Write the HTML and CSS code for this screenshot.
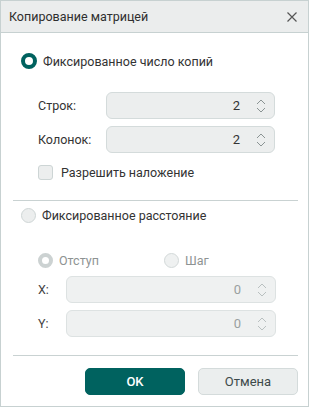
FILE: index.html
```html
<!DOCTYPE html>
<html lang="ru">
<head>
<meta charset="utf-8">
<link rel="stylesheet" href="styles.css">
</head>
<body>
<div class="dialog">
  <div class="header">
    <span class="title">Копирование матрицей</span>
    <svg class="close" width="12" height="12" viewBox="0 0 12 12"><path d="M1.5 1.5 L10.5 10.5 M10.5 1.5 L1.5 10.5" stroke="#555" stroke-width="1.2" fill="none"/></svg>
  </div>
  <div class="content">
    <div class="section s1">
      <label class="radio-row main">
        <span class="radio checked"></span>
        <span class="text">Фиксированное число копий</span>
      </label>
      <div class="fields">
        <div class="field">
          <span class="flabel">Строк:</span>
          <div class="spin wide1">
            <span class="val">2</span>
            <svg class="arrows" width="10" height="16" viewBox="0 0 10 16"><path d="M1 6 L5 2 L9 6 M1 10 L5 14 L9 10" stroke="#8a9393" stroke-width="1" fill="none"/></svg>
          </div>
        </div>
        <div class="field">
          <span class="flabel">Колонок:</span>
          <div class="spin wide1">
            <span class="val">2</span>
            <svg class="arrows" width="10" height="16" viewBox="0 0 10 16"><path d="M1 6 L5 2 L9 6 M1 10 L5 14 L9 10" stroke="#8a9393" stroke-width="1" fill="none"/></svg>
          </div>
        </div>
        <label class="check-row">
          <span class="checkbox"></span>
          <span class="text">Разрешить наложение</span>
        </label>
      </div>
    </div>
    <div class="divider"></div>
    <div class="section s2">
      <label class="radio-row main">
        <span class="radio"></span>
        <span class="text">Фиксированное расстояние</span>
      </label>
      <div class="sub-radios">
        <label class="radio-row disabled r-otst">
          <span class="radio checked-dis"></span>
          <span class="text">Отступ</span>
        </label>
        <label class="radio-row disabled">
          <span class="radio dis"></span>
          <span class="text">Шаг</span>
        </label>
      </div>
      <div class="fields2">
        <div class="field">
          <span class="flabel small">X:</span>
          <div class="spin wide2 dis">
            <span class="val">0</span>
            <svg class="arrows" width="10" height="16" viewBox="0 0 10 16"><path d="M1 6 L5 2 L9 6 M1 10 L5 14 L9 10" stroke="#b9c0c0" stroke-width="1" fill="none"/></svg>
          </div>
        </div>
        <div class="field">
          <span class="flabel small">Y:</span>
          <div class="spin wide2 dis">
            <span class="val">0</span>
            <svg class="arrows" width="10" height="16" viewBox="0 0 10 16"><path d="M1 6 L5 2 L9 6 M1 10 L5 14 L9 10" stroke="#b9c0c0" stroke-width="1" fill="none"/></svg>
          </div>
        </div>
      </div>
    </div>
    <div class="divider d2"></div>
    <div class="buttons">
      <button class="btn ok">OK</button>
      <button class="btn cancel">Отмена</button>
    </div>
  </div>
</div>
</body>
</html>
```

FILE: styles.css
```css
* { box-sizing: border-box; }
html, body { margin: 0; padding: 0; background: #fff; }
body { font-family: Roboto, "Liberation Sans", sans-serif; font-size: 12.5px; color: #333; }

.dialog {
  width: 309px;
  height: 407px;
  border: 1px solid #c7d1d1;
  background: #fff;
  display: flex;
  flex-direction: column;
}
.header {
  height: 32px;
  background: #ebeded;
  border-bottom: 1px solid #c7d1d1;
  display: flex;
  align-items: center;
  justify-content: space-between;
  padding: 0 10px 0 8px;
  flex: none;
}
.title { font-size: 12.5px; color: #2f2f2f; }
.close { display: block; }

.content { padding: 0 10px 0 12px; display: flex; flex-direction: column; }

.radio-row { display: flex; align-items: center; gap: 6px; }
.radio {
  width: 15px; height: 15px; border-radius: 50%;
  border: 1px solid #cfd6d6; background: #eceeee; flex: none;
}
.radio.checked { border: 4px solid #00625f; background: #fff; width: 16px; height: 16px; }
.radio.checked-dis { border: 4px solid #ccd2d2; background: #fff; width: 15px; height: 15px; }
.radio.dis { border-color: #d3d9d9; background: #eff1f1; }

.s1 { padding-top: 20px; }
.s1 .main { padding-left: 8px; gap: 6px; }
.fields { padding: 23px 0 0 25px; display: flex; flex-direction: column; gap: 7px; }
.field { display: flex; align-items: center; }
.flabel { width: 68px; flex: none; }
.flabel.small { width: 28px; color: #444; }

.spin {
  height: 27px;
  border: 1px solid #d4dbdb;
  border-radius: 6px;
  background: #eceeee;
  display: flex; align-items: center; justify-content: flex-end;
  padding-right: 8px;
}
.wide1 { width: 169px; }
.wide2 { width: 210px; }
.val { margin-right: 16px; font-size: 13px; color: #333; }
.spin.dis { background: #eff1f1; border-color: #dde2e2; }
.spin.dis .val { color: #9aa0a0; }
.arrows { display: block; }

.check-row { display: flex; align-items: center; gap: 8px; margin-top: 5px; }
.checkbox {
  width: 15px; height: 15px; border-radius: 3px;
  border: 1px solid #cdd5d5; background: #eceeee; flex: none;
}

.divider { height: 1px; background: #c9d2d2; margin-top: 20px; width: 285px; }
.d2 { margin-top: 18px; }

.s2 { padding-top: 7px; }
.s2 .main { padding-left: 8px; }
.sub-radios { display: flex; padding: 30px 0 0 25px; }
.r-otst { width: 126px; }
.radio-row.disabled .text { color: #8e9393; }
.fields2 { padding: 8px 0 0 25px; display: flex; flex-direction: column; gap: 7px; }

.buttons { display: flex; justify-content: flex-end; gap: 13px; padding-top: 12px; width: 285px; }
.btn {
  width: 100px; height: 27px; border-radius: 5px;
  font-family: Roboto, "Liberation Sans", sans-serif; font-size: 13px;
  border: 1px solid #d4dbdb;
}
.btn.ok { background: #00625f; border-color: #00625f; color: #fff; font-weight: 500; }
.btn.cancel { background: #ebeeee; color: #3d4a4a; }
```
